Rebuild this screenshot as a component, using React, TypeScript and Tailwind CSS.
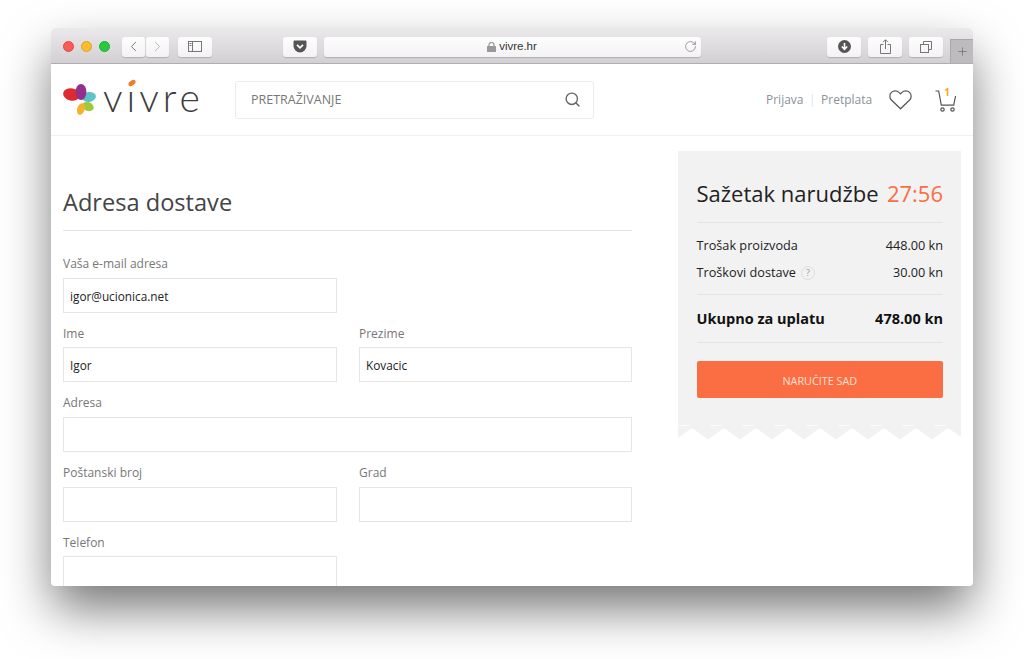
import { Search, ChevronLeft, ChevronRight, RotateCw, Plus } from "lucide-react";

const openSans = { fontFamily: '"Open Sans", sans-serif' };

const ToolButton = ({ className = "", children }: { className?: string; children?: React.ReactNode }) => (
  <div className={`h-5 flex items-center justify-center rounded-[3px] bg-gradient-to-b from-[#fdfdfd] to-[#f3f3f3] shadow-[0_1px_1px_rgba(0,0,0,0.18)] ${className}`}>
    {children}
  </div>
);

const Field = ({ label, value, className = "" }: { label: string; value?: string; className?: string }) => (
  <div className={`h-[69.7px] w-full ${className}`}>
    <div className="h-[34.7px] pt-[12px] text-[12px] leading-[17px] text-[#777]">{label}</div>
    <div className="h-[35px] border border-[#e6e6e6] px-[6px] text-[11.8px] leading-[35px] text-[#222]">{value}</div>
  </div>
);

const Logo = () => (
  <div className="relative flex items-center w-[137px] h-[40px]">
    <svg width="34" height="32" viewBox="0 0 34 32" className="shrink-0">
      <ellipse cx="25" cy="22.5" rx="6" ry="4.4" fill="#9fc93c" transform="rotate(25 25 22.5)" />
      <ellipse cx="18" cy="25" rx="3.8" ry="6" fill="#f5b22f" transform="rotate(20 18 25)" />
      <ellipse cx="26" cy="13" rx="7" ry="5" fill="#5fc4c8" transform="rotate(-10 26 13)" />
      <ellipse cx="8.5" cy="10.5" rx="8.4" ry="6.2" fill="#dc2a30" transform="rotate(12 8.5 10.5)" />
      <ellipse cx="18" cy="8" rx="5.4" ry="8" fill="#93308c" />
    </svg>
    <span className="ml-[6px] mt-[-5px] text-[39px] leading-[40px] tracking-[4px] font-light text-[#3c3c3c]" style={{ fontFamily: "Lato, sans-serif" }}>
      vıvre
    </span>
    <svg width="8" height="8" viewBox="0 0 8 8" className="absolute left-[65px] top-[-1px]">
      <ellipse cx="4" cy="4" rx="4" ry="2.4" fill="#ee7f2d" transform="rotate(-35 4 4)" />
    </svg>
  </div>
);

export default function App() {
  return (
    <div className="w-[1024px] h-[659px] bg-white pt-[28px] pl-[51px] overflow-hidden" style={openSans}>
      <div className="w-[922px] h-[558px] rounded-t-[5px] rounded-b-[4px] overflow-hidden bg-white flex flex-col shadow-[0_24px_50px_-2px_rgba(0,0,0,0.55)]">
        {/* safari toolbar */}
        <div className="h-[36px] shrink-0 flex items-center pt-[2px] pl-[12px] bg-gradient-to-b from-[#ebe9eb] to-[#d2d0d2] border-b border-[#b0aeb0]">
          <div className="flex gap-[7px] w-[59px]">
            <div className="w-[11px] h-[11px] rounded-full bg-[#fc5b57] border border-[#e5453f]" />
            <div className="w-[11px] h-[11px] rounded-full bg-[#fdbc2e] border border-[#e0a125]" />
            <div className="w-[11px] h-[11px] rounded-full bg-[#28c83f] border border-[#1fae30]" />
          </div>
          <ToolButton className="w-[23px]">
            <ChevronLeft size={17} strokeWidth={1.2} className="text-[#666]" />
          </ToolButton>
          <ToolButton className="w-[23px] ml-px">
            <ChevronRight size={17} strokeWidth={1.2} className="text-[#aaa]" />
          </ToolButton>
          <ToolButton className="w-[34px] ml-[9px]">
            <svg width="14" height="11" viewBox="0 0 14 11" fill="none" stroke="#777">
              <rect x="0.5" y="0.5" width="13" height="10" />
              <path d="M4.5 0.5v10M1.5 2.5h2M1.5 4.5h2" />
            </svg>
          </ToolButton>
          <ToolButton className="w-[34px] ml-[71px]">
            <svg width="14" height="13" viewBox="0 0 14 13">
              <path d="M1.5 0.5h11a1 1 0 0 1 1 1v4.5a6.5 6.5 0 0 1-13 0V1.5a1 1 0 0 1 1-1z" fill="#555" />
              <path d="M4 4.8l3 3 3-3" fill="none" stroke="#fff" strokeWidth="1.8" />
            </svg>
          </ToolButton>
          <ToolButton className="relative w-[377px] ml-[7px] pr-[1px] text-[11.5px] text-[#333]">
            <svg width="9" height="10" viewBox="0 0 9 10" className="mr-[3px]">
              <rect x="0" y="4" width="9" height="6" rx="0.5" fill="#999" />
              <path d="M2 4.5V3a2.5 2.5 0 0 1 5 0v1.5" fill="none" stroke="#999" strokeWidth="1.2" />
            </svg>
            <span style={{ fontFamily: '"Liberation Sans", sans-serif' }}>vivre.hr</span>
            <RotateCw size={13} strokeWidth={1.3} className="absolute right-[4px] top-[3px] text-[#777]" />
          </ToolButton>
          <ToolButton className="w-[34px] ml-[126px]">
            <svg width="13" height="13" viewBox="0 0 13 13">
              <circle cx="6.5" cy="6.5" r="6.5" fill="#555" />
              <path d="M6.5 3v6M3.8 6.5l2.7 2.8 2.7-2.8" fill="none" stroke="#fff" strokeWidth="1.6" />
            </svg>
          </ToolButton>
          <ToolButton className="w-[34px] ml-[7px]">
            <svg width="11" height="15" viewBox="0 0 11 15" fill="none" stroke="#777">
              <path d="M3.5 5.5h-3v9h10v-9h-3M5.5 10V1M3 3.2l2.5-2.5L8 3.2" />
            </svg>
          </ToolButton>
          <ToolButton className="w-[34px] ml-[7px]">
            <svg width="12" height="12" viewBox="0 0 12 12" fill="none" stroke="#777">
              <rect x="0.5" y="3.5" width="8" height="8" />
              <path d="M3.5 3.5v-3h8v8h-3" />
            </svg>
          </ToolButton>
          <div className="self-end w-[23px] h-[24px] ml-[7px] bg-[#bdbbbd] border-l border-t border-[#a9a7a9] flex items-center justify-center">
            <Plus size={13} strokeWidth={1} className="text-[#555]" />
          </div>
        </div>

        {/* site header */}
        <div className="h-[72px] shrink-0 flex items-center pl-[12px] border-b border-[#f0f0f0]">
          <Logo />
          <div className="ml-[35px] w-[359px] h-[38px] flex items-center justify-between pl-[15px] pr-[12px] border border-[#ececec] rounded-[2px]">
            <span className="pt-[2px] text-[12.5px] text-[#777]">PRETRAŽIVANJE</span>
            <Search size={17} strokeWidth={2} className="text-[#666]" />
          </div>
          <div className="ml-[172px] flex items-center text-[12px] text-[#8a9298]">
            <span>Prijava</span>
            <span className="mx-[5.5px] text-[#e2e2e2]">|</span>
            <span>Pretplata</span>
          </div>
          <svg width="23" height="20" viewBox="0 0 23 20" fill="none" stroke="#555" strokeWidth="1.2" className="ml-[17px]">
            <path d="M11.5 18.8 2.4 10a5.4 5.4 0 0 1 0-7.6 5.4 5.4 0 0 1 7.6 0l1.5 1.5 1.5-1.5a5.4 5.4 0 0 1 7.6 0 5.4 5.4 0 0 1 0 7.6z" />
          </svg>
          <div className="relative ml-[23px] w-[22px] h-[24px]">
            <svg width="22" height="24" viewBox="0 0 22 24" fill="none" stroke="#555" strokeWidth="1.2">
              <path d="M0.5 3h3.2l2.6 14.2h12.4L20.6 8" />
              <circle cx="7.5" cy="21.5" r="1.7" />
              <circle cx="17.5" cy="21.5" r="1.7" />
            </svg>
            <span className="absolute left-[9px] top-[-3px] text-[10px] leading-[14px] font-bold text-[#f5a623]">1</span>
          </div>
        </div>

        {/* page body */}
        <div className="flex-1 flex pl-[12px] overflow-hidden">
          <div className="w-[569px] pt-[47px]">
            <h1 className="h-[48px] text-[23.6px] leading-[38px] text-[#444] border-b border-[#e6e6e6]">Adresa dostave</h1>
            <div className="grid grid-cols-[274px_273px] gap-x-[22px] pt-[12.05px]">
              <Field label="Vaša e-mail adresa" value="igor@ucionica.net" />
              <div />
              <Field label="Ime" value="Igor" />
              <Field label="Prezime" value="Kovacic" />
              <Field label="Adresa" className="col-span-2 w-[569px]" />
              <Field label="Poštanski broj" />
              <Field label="Grad" />
              <Field label="Telefon" />
            </div>
          </div>

          <div className="ml-[46px] w-[283px] mt-[15px] self-start">
            <div className="bg-[#f2f2f2] h-[274px] pl-[18.5px] pr-[18px] pt-[27px]">
              <div className="flex items-baseline justify-between h-[45px] border-b border-[#e4e4e4]">
                <span className="text-[22px] leading-[30px] text-[#222]">Sažetak narudžbe</span>
                <span className="text-[22px] leading-[30px] text-[#fb6d42]">27:56</span>
              </div>
              <div className="h-[72px] pt-[9px] border-b border-[#e4e4e4] text-[12.7px] text-[#222]">
                <div className="flex justify-between h-[27px] leading-[27px]">
                  <span>Trošak proizvoda</span>
                  <span>448.00 kn</span>
                </div>
                <div className="flex justify-between h-[27px] leading-[27px]">
                  <span className="flex items-center">
                    Troškovi dostave
                    <span className="ml-[5px] w-[14px] h-[14px] rounded-full border border-[#ddd] text-[9px] leading-[12px] text-center text-[#999]">?</span>
                  </span>
                  <span>30.00 kn</span>
                </div>
              </div>
              <div className="flex justify-between items-center h-[48px] border-b border-[#e4e4e4] text-[14.5px] font-bold text-[#111]">
                <span>Ukupno za uplatu</span>
                <span>478.00 kn</span>
              </div>
              <div className="mt-[18px] h-[37px] rounded-[2px] bg-[#fb6d42] text-center text-[10.8px] leading-[40px] text-[#fde0d6]">
                NARUČITE SAD
              </div>
            </div>
            <svg width="283" height="15" viewBox="0 0 283 15" className="block">
              <path
                fill="#f2f2f2"
                d="M0 0H283V12 L270 3 L254 14.5 L238 3 L222 14.5 L206 3 L190 14.5 L174 3 L158 14.5 L142 3 L126 14.5 L110 3 L94 14.5 L78 3 L62 14.5 L46 3 L30 14.5 L14 3 L0 13Z"
              />
              <path
                stroke="#ffffff"
                strokeOpacity="0.7"
                d="M0 0.5H12M32 0.5H45M64 0.5H77M96 0.5H109M128 0.5H141M160 0.5H173M192 0.5H205M224 0.5H237M256 0.5H269"
              />
            </svg>
          </div>
        </div>
      </div>
    </div>
  );
}
